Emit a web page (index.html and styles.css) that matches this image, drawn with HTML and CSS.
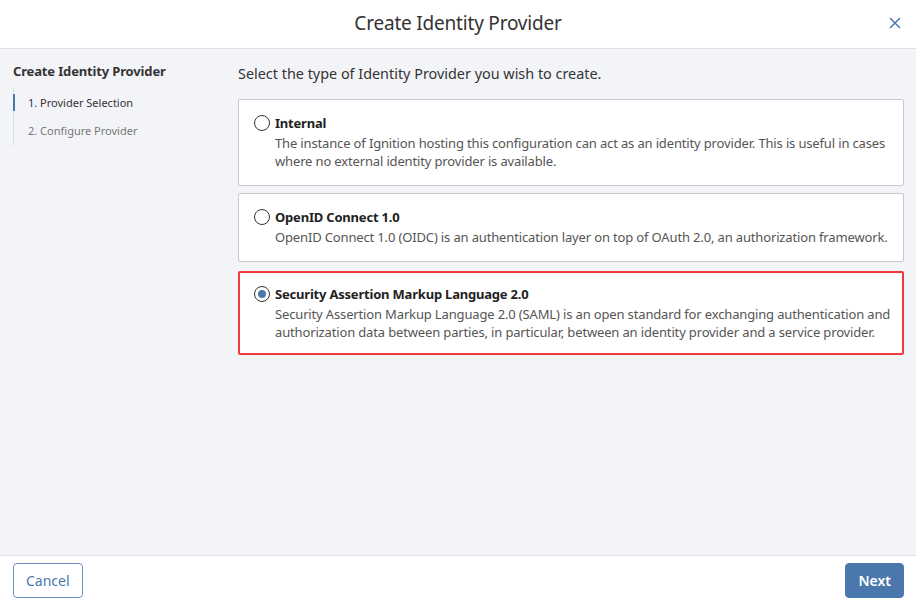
FILE: index.html
```html
<!DOCTYPE html>
<html>
<head>
<meta charset="utf-8">
<link rel="stylesheet" href="styles.css">
</head>
<body>
<div class="dialog">
  <header class="header">
    <div class="title">Create Identity Provider</div>
    <button class="close" aria-label="Close">
      <svg width="12" height="12" viewBox="0 0 12 12"><path d="M1 1 L11 11 M11 1 L1 11" stroke="#4a78ad" stroke-width="1.5" fill="none"/></svg>
    </button>
  </header>
  <div class="body">
    <aside class="sidebar">
      <div class="side-title">Create Identity Provider</div>
      <ul class="steps">
        <li class="step active">1. Provider Selection</li>
        <li class="step">2. Configure Provider</li>
      </ul>
    </aside>
    <main class="main">
      <div class="prompt">Select the type of Identity Provider you wish to create.</div>
      <div class="cards">
        <div class="card">
          <span class="radio"></span>
          <div class="card-text">
            <div class="card-title">Internal</div>
            <div class="card-desc">The instance of Ignition hosting this configuration can act as an identity provider. This is useful in cases where no external identity provider is available.</div>
          </div>
        </div>
        <div class="card">
          <span class="radio"></span>
          <div class="card-text">
            <div class="card-title">OpenID Connect 1.0</div>
            <div class="card-desc">OpenID Connect 1.0 (OIDC) is an authentication layer on top of OAuth 2.0, an authorization framework.</div>
          </div>
        </div>
        <div class="card selected">
          <span class="radio checked"></span>
          <div class="card-text">
            <div class="card-title">Security Assertion Markup Language 2.0</div>
            <div class="card-desc">Security Assertion Markup Language 2.0 (SAML) is an open standard for exchanging authentication and authorization data between parties, in particular, between an identity provider and a service provider.</div>
          </div>
        </div>
      </div>
    </main>
  </div>
  <footer class="footer">
    <button class="btn btn-secondary">Cancel</button>
    <button class="btn btn-primary">Next</button>
  </footer>
</div>
</body>
</html>
```
FILE: styles.css
```css
* { box-sizing: border-box; }
html, body { margin: 0; padding: 0; }
body {
  font-family: "Noto Sans", "Open Sans", sans-serif;
  color: #333;
  background: #fff;
}
.dialog {
  width: 916px;
  height: 606px;
  display: flex;
  flex-direction: column;
}
.header {
  height: 49px;
  flex: none;
  display: flex;
  align-items: center;
  justify-content: center;
  position: relative;
  border-bottom: 1px solid #dfe1e6;
  background: #fff;
}
.title {
  font-size: 19px;
  color: #333;
  letter-spacing: -0.2px;
  margin-top: -3px;
}
.close {
  position: absolute;
  right: 14px;
  top: 16px;
  border: 0;
  background: none;
  padding: 0;
  width: 14px;
  height: 14px;
  display: flex;
  align-items: center;
  justify-content: center;
}
.body {
  flex: 1;
  display: flex;
  background: #f3f4f8;
  min-height: 0;
}
.sidebar {
  width: 238px;
  flex: none;
  padding: 13px 13px 0 13px;
}
.side-title {
  font-size: 13px;
  font-weight: 700;
  line-height: 18px;
  letter-spacing: -0.15px;
  color: #333;
}
.steps {
  list-style: none;
  margin: 8px 0 0 0;
  padding: 6px 0 6px 0;
  border-left: 1px solid #dcdfe5;
}
.step {
  font-size: 11px;
  line-height: 18px;
  padding-left: 14px;
  color: #777;
  margin-bottom: 10px;
  position: relative;
}
.step:last-child { margin-bottom: 0; }
.step.active { color: #333; }
.step.active::before {
  content: "";
  position: absolute;
  left: -1px;
  top: 0;
  width: 2px;
  height: 17px;
  background: #4a78ad;
}
.main {
  flex: 1;
  padding: 15px 12px 0 0;
}
.prompt {
  font-size: 14.4px;
  line-height: 20px;
  color: #333;
}
.cards {
  margin-top: 15px;
  display: flex;
  flex-direction: column;
  gap: 7px;
}
.card {
  background: #fff;
  border: 1px solid #c5c8cf;
  border-radius: 2px;
  padding: 14px 8px 15px 15px;
  display: flex;
  gap: 5px;
}
.card.selected {
  border: 2px solid #f0383f;
  margin-top: 2px;
  padding: 12px 7px 12px 14px;
}
.radio {
  flex: none;
  width: 16px;
  height: 16px;
  margin-top: 1px;
  border: 1.5px solid #333;
  border-radius: 50%;
  display: flex;
  align-items: center;
  justify-content: center;
}
.radio.checked::after {
  content: "";
  width: 8px;
  height: 8px;
  border-radius: 50%;
  background: #4a78ad;
}
.card-text { flex: 1; }
.card-title {
  font-size: 13px;
  font-weight: 700;
  line-height: 18px;
  letter-spacing: -0.2px;
  color: #222;
}
.card-desc {
  margin-top: 2px;
  font-size: 13px;
  line-height: 18px;
  letter-spacing: -0.15px;
  color: #555;
}
.footer {
  height: 51px;
  flex: none;
  border-top: 1px solid #dfe1e6;
  background: #fff;
  display: flex;
  justify-content: space-between;
  align-items: flex-start;
  padding: 7px 12px 0 13px;
}
.btn {
  font-family: "Noto Sans", "Open Sans", sans-serif;
  font-size: 14px;
  height: 35px;
  border-radius: 4px;
  padding: 0 12px;
  cursor: pointer;
}
.btn-secondary {
  background: #fff;
  color: #4a78ad;
  border: 1px solid #6b8fc0;
}
.btn-primary {
  background: #4a78ad;
  color: #fff;
  border: 1px solid #4a78ad;
  font-weight: 600;
}
```
